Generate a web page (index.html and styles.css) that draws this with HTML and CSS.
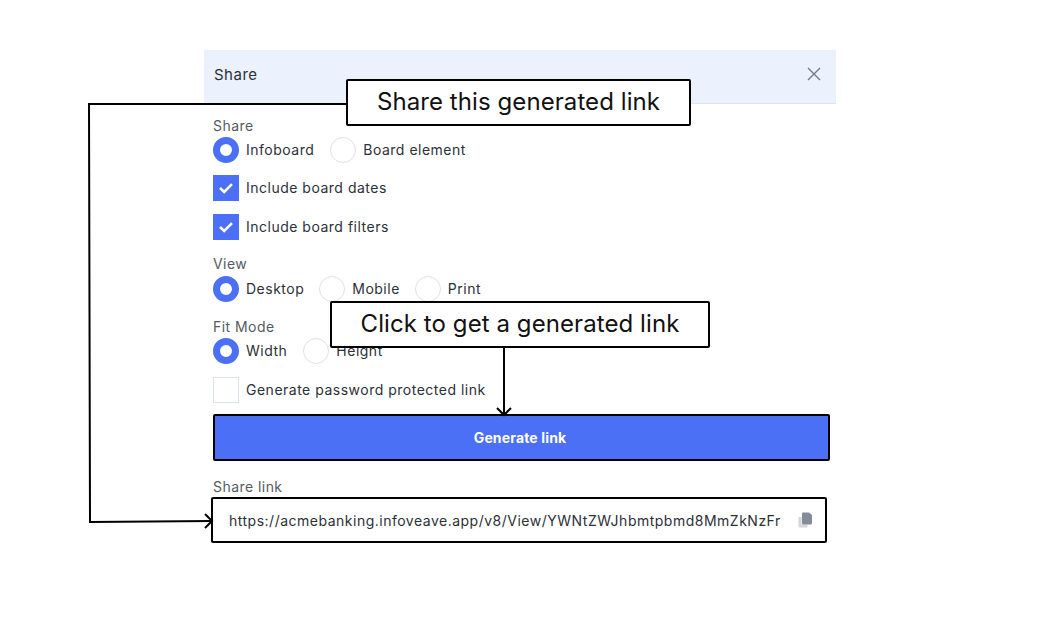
FILE: index.html
```html
<!DOCTYPE html>
<html lang="en">
<head>
    <meta charset="UTF-8">
    <title>Share</title>
    <link rel="stylesheet" href="styles.css">
</head>
<body>

<div class="dialog">
    <div class="dialog-header">
        <span class="dialog-title">Share</span>
        <svg class="close-icon" width="14" height="14" viewBox="0 0 14 14"><path d="M1 1L13 13M13 1L1 13" stroke="#717a8a" stroke-width="1.4" fill="none"/></svg>
    </div>
    <div class="dialog-body">
        <div class="label">Share</div>
        <div class="row">
            <span class="radio selected"></span><span class="option">Infoboard</span>
            <span class="radio"></span><span class="option">Board element</span>
        </div>
        <div class="row row-check">
            <span class="check checked"><svg width="16" height="12" viewBox="0 0 16 12"><path d="M2 6L6.2 10L14 2.2" stroke="#fff" stroke-width="2.6" fill="none"/></svg></span><span class="option">Include board dates</span>
        </div>
        <div class="row row-check2">
            <span class="check checked"><svg width="16" height="12" viewBox="0 0 16 12"><path d="M2 6L6.2 10L14 2.2" stroke="#fff" stroke-width="2.6" fill="none"/></svg></span><span class="option">Include board filters</span>
        </div>
        <div class="label label-view">View</div>
        <div class="row row-view">
            <span class="radio selected"></span><span class="option">Desktop</span>
            <span class="radio"></span><span class="option">Mobile</span>
            <span class="radio"></span><span class="option">Print</span>
        </div>
        <div class="label label-fit">Fit Mode</div>
        <div class="row row-fit">
            <span class="radio selected"></span><span class="option">Width</span>
            <span class="radio"></span><span class="option">Height</span>
        </div>
        <div class="row row-password">
            <span class="check"></span><span class="option">Generate password protected link</span>
        </div>
        <button class="generate">Generate link</button>
        <div class="label label-link">Share link</div>
        <div class="link-box">
            <span class="link-text">https://acmebanking.infoveave.app/v8/View/YWNtZWJhbmtpbmd8MmZkNzFr</span>
            <svg class="copy-icon" width="14" height="16" viewBox="0 0 14 16"><path d="M0.5 5H3.5V12.5H9.5V15.5H2Q0.5 15.5 0.5 14Z" fill="#d3d6db"/><path d="M5 0.5H11L14 3V11Q14 12.5 12.5 12.5H5Q4 12.5 4 11V1.5Q4 0.5 5 0.5Z" fill="#858c99"/></svg>
        </div>
    </div>
</div>

<svg class="connectors" width="1040" height="620" viewBox="0 0 1040 620">
    <path d="M346 104H89L90 522L212 521" />
    <path d="M205 514L212 521L205 528" />
    <path d="M504 347V415" />
    <path d="M497 408L504 415L511 408" />
</svg>

<div class="callout callout-share">Share this generated link</div>
<div class="callout callout-click">Click to get a generated link</div>

</body>
</html>
```

FILE: styles.css
```css
body {
    margin: 0;
    padding: 50px 0 0 204px;
    background-color: #fff;
    font-family: Inter, sans-serif;
    font-size: 14px;
    color: #2c3038;
}

.dialog {
    width: 632px;
}

.dialog-header {
    height: 53px;
    display: flex;
    align-items: center;
    justify-content: space-between;
    padding: 0 15px 0 10px;
    background-color: #ebf1fd;
    border-bottom: 1px solid #dfe4ee;
}

.dialog-title {
    font-size: 15px;
    letter-spacing: 0.5px;
    margin-top: -4px;
}

.close-icon {
    margin-top: -5px;
}

.dialog-body {
    padding: 12px 0 0 9px;
}

.label {
    height: 21px;
    line-height: 20px;
    letter-spacing: 0.45px;
    color: #555a63;
}

.label-view {
    margin-top: 14px;
    height: 22px;
}

.label-fit {
    margin-top: 15px;
}

.label-link {
    margin-top: 16px;
    height: 20px;
}

.row {
    height: 26px;
    display: flex;
    align-items: center;
}

.row-check {
    margin-top: 12px;
}

.row-check2 {
    margin-top: 13px;
}

.row-password {
    margin-top: 13px;
}

.radio {
    width: 26px;
    height: 26px;
    box-sizing: border-box;
    border: 1.5px solid #dde1e8;
    border-radius: 50%;
    background-color: #fff;
    margin-left: 16px;
    flex-shrink: 0;
}

.radio:first-child {
    margin-left: 0;
}

.row-view .radio:not(:first-child) {
    margin-left: 15px;
}

.radio.selected {
    border: 7px solid #4b6ff5;
}

.check {
    width: 26px;
    height: 26px;
    box-sizing: border-box;
    border: 1.5px solid #dde1e8;
    display: flex;
    align-items: center;
    justify-content: center;
    flex-shrink: 0;
}

.check.checked {
    background-color: #4b6ff5;
    border: none;
}

.option {
    margin: -2px 0 0 7px;
    letter-spacing: 0.5px;
}

.generate {
    display: block;
    width: 617px;
    height: 47px;
    margin-top: 11px;
    background-color: #4b6ff5;
    border: 2px solid #000;
    border-radius: 2px;
    color: #fff;
    font-family: Inter, sans-serif;
    font-size: 14px;
    font-weight: 700;
    letter-spacing: 0.15px;
    padding: 0 3px 1px 0;
}

.link-box {
    width: 616px;
    height: 46px;
    box-sizing: border-box;
    margin-left: -2px;
    display: flex;
    align-items: center;
    justify-content: space-between;
    padding: 0 13px 0 16px;
    border: 2px solid #000;
    border-radius: 2px;
}

.link-text {
    letter-spacing: 0.5px;
    white-space: nowrap;
}

.connectors {
    position: absolute;
    left: 0;
    top: 0;
}

.connectors path {
    fill: none;
    stroke: #000;
    stroke-width: 2;
}

.callout {
    position: absolute;
    box-sizing: border-box;
    height: 47px;
    padding-bottom: 2px;
    display: flex;
    align-items: center;
    justify-content: center;
    background-color: #fff;
    border: 2px solid #000;
    border-radius: 2px;
    font-size: 24px;
    letter-spacing: 0.08px;
    color: #111;
}

.callout-share {
    left: 346px;
    top: 79px;
    width: 345px;
}

.callout-click {
    left: 330px;
    top: 301px;
    width: 380px;
}
```
